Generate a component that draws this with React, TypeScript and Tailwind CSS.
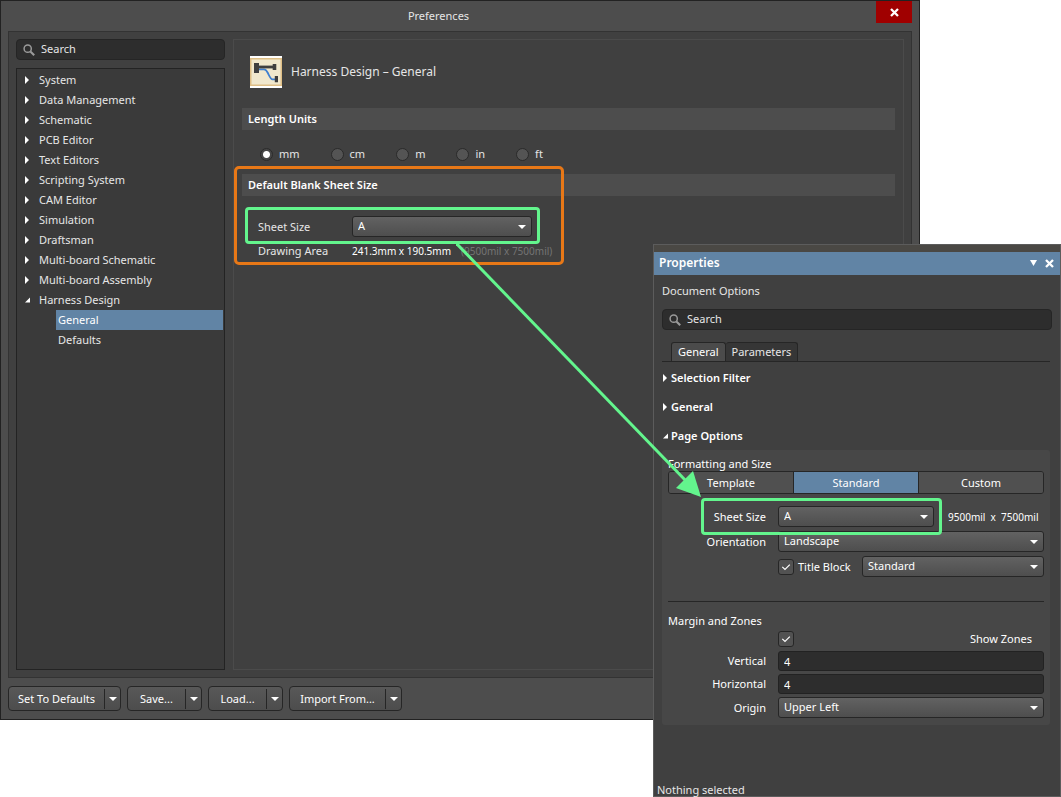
import React, { useState } from "react";

const SELECT =
  "h-[21px] w-full appearance-none rounded-[3px] border border-[#262626] bg-linear-to-b from-[#626262] to-[#4e4e4e] pb-0.5 pl-[5px] pr-5 text-[11px] leading-4 text-white outline-none";
const FIELD =
  "h-5 w-full rounded-[3px] border border-[#222] bg-[#2d2d2d] px-[5px] text-[11px] leading-4 text-white outline-none";

function Caret({ className = "" }: { className?: string }) {
  return (
    <svg viewBox="0 0 8 4" className={`h-1 w-2 fill-white ${className}`} aria-hidden="true">
      <path d="M0 0h8L4 4z" />
    </svg>
  );
}

function Twisty({ open = false }: { open?: boolean }) {
  return (
    <svg viewBox="0 0 6 8" className="h-2 w-1.5 shrink-0 fill-white" aria-hidden="true">
      {open ? <path d="M6 1.500v5H1z" /> : <path d="M1 0l4 4-4 4z" />}
    </svg>
  );
}

function Cross() {
  return (
    <svg viewBox="0 0 9 9" className="size-[9px] stroke-white" aria-hidden="true">
      <path d="M1 1l7 7M8 1L1 8" strokeWidth="2.3" />
    </svg>
  );
}

function Select({ id, options, label }: { id: string; options: string[]; label?: string }) {
  return (
    <div className="relative min-w-0 flex-1">
      <select id={id} aria-label={label} className={SELECT}>
        {options.map((o) => (
          <option key={o}>{o}</option>
        ))}
      </select>
      <Caret className="pointer-events-none absolute right-[6px] top-[9px]" />
    </div>
  );
}

function SearchBox({ label }: { label: string }) {
  return (
    <label className="flex h-[21px] items-center gap-[6px] rounded-[4px] border border-[#252525] bg-[#2d2d2d] pl-[6px]">
      <svg viewBox="0 0 12 12" className="size-3 shrink-0 fill-none stroke-[#9a9a9a]" aria-hidden="true">
        <circle cx="4.7" cy="4.7" r="3.6" strokeWidth="1.5" />
        <path d="M7.4 7.4l3.8 3.8" strokeWidth="2.1" />
      </svg>
      <input
        type="text"
        aria-label={label}
        placeholder="Search"
        className="min-w-0 flex-1 bg-transparent pb-0.5 text-[11px] leading-4 outline-none placeholder:text-[#e6e6e6]"
      />
    </label>
  );
}

function Check({ id, label }: { id: string; label?: string }) {
  return (
    <span className="grid size-4 shrink-0">
      <input
        id={id}
        type="checkbox"
        defaultChecked
        aria-label={label}
        className="peer col-start-1 row-start-1 size-4 appearance-none rounded-[3px] border border-[#262626] bg-[#525252]"
      />
      <svg
        viewBox="0 0 16 16"
        className="pointer-events-none invisible col-start-1 row-start-1 size-4 fill-none stroke-white peer-checked:visible"
        aria-hidden="true"
      >
        <path d="M4.3 7.8l2.7 2.7 4.8-4.8" strokeWidth="1.2" />
      </svg>
    </span>
  );
}

const TREE = [
  "System",
  "Data Management",
  "Schematic",
  "PCB Editor",
  "Text Editors",
  "Scripting System",
  "CAM Editor",
  "Simulation",
  "Draftsman",
  "Multi-board Schematic",
  "Multi-board Assembly",
];

function Sidebar() {
  return (
    <aside className="flex w-[209px] shrink-0 flex-col gap-2">
      <SearchBox label="Search preferences" />
      <nav className="flex-1 border border-[#232323] bg-[#3a3a3a] py-px">
        <ul className="leading-5">
          {TREE.map((t) => (
            <li key={t}>
              <button type="button" className="flex w-full items-center gap-[9px] pl-[7px] text-left">
                <Twisty />
                {t}
              </button>
            </li>
          ))}
          <li>
            <button type="button" className="flex w-full items-center gap-[9px] pl-[7px] text-left">
              <Twisty open />
              Harness Design
            </button>
            <ul className="pl-[39px] pr-px">
              <li>
                <button type="button" className="w-full bg-[#6184a5] pl-[2px] text-left text-white">
                  General
                </button>
              </li>
              <li>
                <button type="button" className="w-full pl-[2px] text-left">
                  Defaults
                </button>
              </li>
            </ul>
          </li>
        </ul>
      </nav>
    </aside>
  );
}

function HarnessIcon() {
  return (
    <svg viewBox="0 0 32 32" className="size-8" aria-hidden="true">
      <rect width="32" height="32" fill="#fff" />
      <rect x=".75" y="2.75" width="30.5" height="26.5" fill="#f1e8cd" stroke="#dfbf86" strokeWidth="1.5" />
      <path d="M9 13.300h5c2.500 0 3 2 4.500 5s2.500 5 4 5h3" fill="none" stroke="#3f7fd0" strokeWidth="1.8" />
      <path d="M4 7h5v10H4zM22.700 8h3.600v6h-3.600zM24.800 20H28v6.300h-3.200z" fill="#3f3f3f" />
      <path d="M9 11h14" stroke="#3f3f3f" strokeWidth="2.8" />
    </svg>
  );
}

function SectionTitle({ children }: { children: React.ReactNode }) {
  return <h3 className="bg-[#4d4d4d] px-[6px] text-[11px] font-semibold leading-[22px] text-white">{children}</h3>;
}

function SplitButton({ label, wide = false }: { label: string; wide?: boolean }) {
  return (
    <div
      className={`flex h-[25px] items-center rounded-[4px] border border-[#262626] bg-linear-to-b from-[#585858] to-[#4d4d4d] text-white ${
        wide ? "w-[113px]" : "w-[75px]"
      }`}
    >
      <button type="button" className="flex-1 whitespace-nowrap text-center">
        {label}
      </button>
      <button
        type="button"
        aria-label={`${label} options`}
        className="flex h-5 w-4 items-center justify-center border-l border-[#262626]"
      >
        <Caret />
      </button>
    </div>
  );
}

function Preferences() {
  return (
    <section className="mb-[77px] mr-[141px] flex flex-1 flex-col border border-[#222] bg-[#4d4d4d] pb-2">
      <header className="flex h-[30px] items-start pr-[7px]">
        <h1 className="flex-1 text-center text-[11px] leading-[30px]">Preferences</h1>
        <button type="button" aria-label="Close" className="flex h-[22px] w-9 items-center justify-center bg-[#a00000]">
          <Cross />
        </button>
      </header>
      <div className="mx-[7px] flex flex-1 gap-2 border border-[#333] bg-[#404040] p-[7px]">
        <Sidebar />
        <main className="flex-1 border border-[#4b4b4b] px-2 pt-4">
          <div className="flex items-center gap-[9px] pl-2">
            <HarnessIcon />
            <h2 className="text-xs">Harness Design – General</h2>
          </div>
          <div className="mt-5">
            <SectionTitle>Length Units</SectionTitle>
          </div>
          <fieldset className="mt-4 flex gap-[31px] pl-[18px]" aria-label="Length Units">
            {["mm", "cm", "m", "in", "ft"].map((u, i) => (
              <label key={u} className="flex items-center gap-[6px] leading-4">
                <input
                  type="radio"
                  name="unit"
                  defaultChecked={i === 0}
                  className="size-[13px] appearance-none rounded-full border border-[#2a2a2a] bg-[#545454] checked:bg-[radial-gradient(circle,#fff_3px,#464646_4px)]"
                />
                {u}
              </label>
            ))}
          </fieldset>
          <div className="relative mt-3">
            <SectionTitle>Default Blank Sheet Size</SectionTitle>
            <div className="mt-5 grid grid-cols-[82px_180px_auto] items-center justify-start gap-x-3 pl-4">
              <label htmlFor="pref-size">Sheet Size</label>
              <Select id="pref-size" options={["A", "B", "C"]} />
            </div>
            <div className="mt-1.5 flex items-center pl-4 leading-4">
              <span className="w-[94px]">Drawing Area</span>
              <span className="whitespace-nowrap text-[10px] text-white">241.3mm x 190.5mm</span>
              <span className="whitespace-nowrap pl-[10px] text-[10px] text-[#747474]">(9500mil x 7500mil)</span>
            </div>
            <div className="pointer-events-none absolute -left-2 -top-2 h-[99px] w-[330px] rounded-[5px] border-3 border-[#e87817]" />
            <div className="pointer-events-none absolute left-[3px] top-[33px] h-[37px] w-[295px] rounded-[4px] border-3 border-[#63f58d]" />
          </div>
        </main>
      </div>
      <footer className="mx-[7px] mt-2 flex gap-1.5">
        <SplitButton label="Set To Defaults" wide />
        <SplitButton label="Save..." />
        <SplitButton label="Load..." />
        <SplitButton label="Import From..." wide />
      </footer>
    </section>
  );
}

const ROW = "grid grid-cols-[98px_minmax(0,1fr)] items-center gap-x-3";

function GroupHeading({ open = false, children }: { open?: boolean; children: React.ReactNode }) {
  return (
    <h3 className="text-[11px] font-semibold leading-[29px] text-white">
      <button type="button" className="flex items-center gap-[3px]">
        <Twisty open={open} />
        {children}
      </button>
    </h3>
  );
}

function Properties() {
  const [mode, setMode] = useState("Standard");
  return (
    <section className="absolute bottom-0 right-0 top-[244px] flex w-[408px] flex-col border border-[#5c5c5c] bg-[#404040]">
      <div className="h-[7px] bg-[#4a4844]" />
      <header className="flex h-[23px] items-center bg-[#6184a5] pb-px pl-[5px] pr-[6px] text-white">
        <h2 className="flex-1 text-xs font-semibold">Properties</h2>
        <button type="button" aria-label="Panel menu" className="mr-2">
          <svg viewBox="0 0 7 6" className="h-1.5 w-[7px] fill-white" aria-hidden="true">
            <path d="M0 0h7L3.500 6z" />
          </svg>
        </button>
        <button type="button" aria-label="Close panel">
          <Cross />
        </button>
      </header>
      <div className="flex flex-1 flex-col pl-2 pr-[10px]">
        <p className="mb-[10px] mt-2 leading-4">Document Options</p>
        <div className="-mr-0.5">
          <SearchBox label="Search properties" />
        </div>
        <div role="tablist" className="mt-3 flex border-b border-[#262626] pl-[9px] leading-[18px]">
          <button type="button" role="tab" aria-selected="true" className="rounded-t-[3px] border border-b-0 border-[#262626] bg-[#4b4b4b] px-1.5 text-white">
            General
          </button>
          <button type="button" role="tab" aria-selected="false" className="rounded-t-[3px] border border-b-0 border-l-0 border-[#262626] bg-[#363636] px-1.5">
            Parameters
          </button>
        </div>
        <div className="pt-px">
          <GroupHeading>Selection Filter</GroupHeading>
          <GroupHeading>General</GroupHeading>
          <GroupHeading open>Page Options</GroupHeading>
        </div>
        <div className="rounded-[3px] bg-[#474747] px-1.5 pb-[7px] pt-[6px] text-white">
          <h4 className="leading-[15px]">Formatting and Size</h4>
          <div className="flex h-[23px] divide-x divide-[#262626] overflow-hidden rounded-[3px] border border-[#262626]">
            {["Template", "Standard", "Custom"].map((m) => (
              <button
                key={m}
                type="button"
                aria-pressed={m === mode}
                onClick={() => setMode(m)}
                className={`flex-1 ${m === mode ? "bg-[#6184a5]" : "bg-[#505050]"}`}
              >
                {m}
              </button>
            ))}
          </div>
          <div className="mt-3 flex flex-col gap-1">
            <div className={`relative z-10 ${ROW}`}>
              <label htmlFor="prop-size" className="text-right">Sheet Size</label>
              <div className="flex items-center">
                <Select id="prop-size" options={["A", "B", "C"]} />
                <span className="w-[110px] whitespace-pre pl-[14px] text-[10px]">9500mil  x  7500mil</span>
              </div>
              <div className="pointer-events-none absolute -top-2 left-[33px] right-[102px] h-[37px] rounded-[4px] border-3 border-[#63f58d]" />
            </div>
            <div className={ROW}>
              <label htmlFor="orientation" className="text-right">Orientation</label>
              <Select id="orientation" options={["Landscape", "Portrait"]} />
            </div>
            <div className={ROW}>
              <span />
              <div className="flex items-center">
                <Check id="title-block" />
                <label htmlFor="title-block" className="w-[68px] whitespace-nowrap pl-1">Title Block</label>
                <Select id="title-style" label="Title block style" options={["Standard", "ANSI"]} />
              </div>
            </div>
          </div>
          <hr className="mb-[11px] mt-6 border-[#262626]" />
          <h4 className="leading-4">Margin and Zones</h4>
          <div className={`mt-0.5 ${ROW}`}>
            <span />
            <div className="flex items-center justify-between pr-3">
              <Check id="show-zones" />
              <label htmlFor="show-zones">Show Zones</label>
            </div>
          </div>
          <div className="mt-1 flex flex-col gap-[3px]">
            <div className={ROW}>
              <label htmlFor="vertical" className="text-right">Vertical</label>
              <input id="vertical" type="text" defaultValue="4" className={FIELD} />
            </div>
            <div className={ROW}>
              <label htmlFor="horizontal" className="text-right">Horizontal</label>
              <input id="horizontal" type="text" defaultValue="4" className={FIELD} />
            </div>
            <div className={ROW}>
              <label htmlFor="origin" className="text-right">Origin</label>
              <Select id="origin" options={["Upper Left", "Bottom Right"]} />
            </div>
          </div>
        </div>
      </div>
      <footer className="pl-[3px] leading-[13px]">Nothing selected</footer>
    </section>
  );
}

function Arrow() {
  return (
    <div className="pointer-events-none absolute left-[456px] right-[360px] top-[243px] z-20 h-[254px]">
      <svg viewBox="0 0 245 254" preserveAspectRatio="none" className="size-full stroke-[#63f58d]" aria-hidden="true">
        <path d="M0 0L232 240" strokeWidth="3" vectorEffect="non-scaling-stroke" />
      </svg>
      <svg viewBox="0 0 25 26" className="absolute bottom-0 right-0 h-[26px] w-[25px] fill-[#63f58d]" aria-hidden="true">
        <path d="M25 26L0 17 17 0z" />
      </svg>
    </div>
  );
}

export default function App() {
  return (
    <div className="relative flex min-h-screen flex-col bg-white font-['Noto_Sans',sans-serif] text-[11px] leading-4 text-[#e6e6e6]">
      <Preferences />
      <Properties />
      <Arrow />
    </div>
  );
}
